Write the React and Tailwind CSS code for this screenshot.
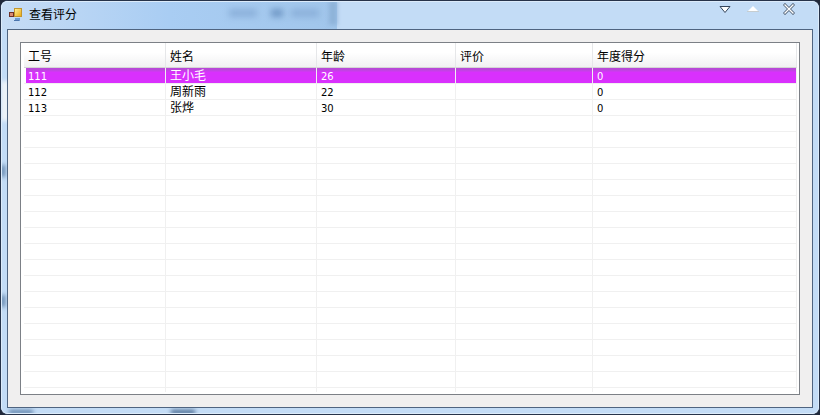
import { clsx } from 'clsx';

const employees = [
  { id: '111', name: '王小毛', age: '26', review: '', score: '0' },
  { id: '112', name: '周新雨', age: '22', review: '', score: '0' },
  { id: '113', name: '张烨', age: '30', review: '', score: '0' },
];

const columns = [
  { key: 'id', label: '工号', width: 'w-[142px]' },
  { key: 'name', label: '姓名', width: 'w-[151px]' },
  { key: 'age', label: '年龄', width: 'w-[139px]' },
  { key: 'review', label: '评价', width: 'w-[137px]' },
  { key: 'score', label: '年度得分', width: '' },
];

const ROW_COUNT = 20;

// Default WinForms application icon
const AppIcon = () => (
  <svg className="h-4 w-4" viewBox="0 0 16 16" aria-hidden="true">
    <defs>
      <linearGradient id="gold" x1="0" y1="0" x2="1" y2="1">
        <stop offset="0" stopColor="#fff3a0" />
        <stop offset="1" stopColor="#eaa60c" />
      </linearGradient>
    </defs>
    <rect x="7.5" y="1.5" width="7" height="8" fill="url(#gold)" stroke="#c2952c" />
    <rect x="2.5" y="5.5" width="4" height="4" fill="#d98a72" stroke="#6d3026" />
    <rect x="8" y="11" width="5" height="3" fill="#6f9bd0" />
    <rect x="7" y="13" width="5" height="1" fill="#4a74ad" />
  </svg>
);

const MinimizeIcon = () => (
  <svg className="h-3 w-3" viewBox="0 0 12 12" aria-hidden="true">
    <path d="M1 3.5h10L6 9.5z" fill="#fff" stroke="#35465c" />
  </svg>
);

const MaximizeIcon = () => (
  <svg className="h-3 w-3" viewBox="0 0 12 12" aria-hidden="true">
    <path d="M1 8h10L6 3z" fill="#fff" />
    <path d="M0 8.5h12" stroke="#c6cdd0" />
  </svg>
);

const CloseIcon = () => (
  <svg className="h-3 w-3" viewBox="0 0 12 12" fill="none" aria-hidden="true">
    <path d="M2 2l8 8M10 2l-8 8" stroke="#4c5c70" strokeWidth="3" strokeLinecap="square" />
    <path d="M2 2l8 8M10 2l-8 8" stroke="#fff" strokeWidth="1.4" strokeLinecap="square" />
  </svg>
);

// Soft shapes showing through the glass frame
const GlassBackdrop = () => (
  <div className="pointer-events-none absolute inset-0 overflow-hidden rounded-md" aria-hidden="true">
    <div className="absolute top-0 left-0 h-7 w-[336px] bg-linear-to-r from-[#c6dcf5] via-[#a9cdf3] to-[#a1c6eb]" />
    <div className="absolute top-0 left-[328px] h-6 w-2 bg-[#8eb2d8] blur-[2px]" />
    <div className="absolute top-2 left-[228px] h-2 w-7 bg-[#8bb0da] blur-[3px]" />
    <div className="absolute top-2 left-[270px] h-2 w-3 bg-[#6f97c5] blur-[3px]" />
    <div className="absolute top-2 left-[290px] h-2 w-7 bg-[#8bb0da] blur-[3px]" />
    <div className="absolute top-[80px] left-0 h-10 w-2 bg-[#eef3f8] blur-[2px]" />
    <div className="absolute top-[164px] left-0 h-3 w-1 bg-[#587ba3] blur-[2px]" />
    <div className="absolute top-[294px] left-0 h-3 w-1 bg-[#587ba3] blur-[2px]" />
    <div className="absolute bottom-0 left-2 h-1 w-6 bg-[#587ba3] blur-[2px]" />
    <div className="absolute bottom-0 left-[170px] h-1 w-6 bg-[#3f6088] blur-[2px]" />
    <div className="absolute inset-0 rounded-md border border-[#dcebfa]" />
  </div>
);

function TitleBar() {
  return (
    <header className="relative flex h-7 items-start justify-between pr-4">
      <div className="flex items-center gap-1 pt-[6px]">
        <AppIcon />
        <h1 className="pl-[2px] text-[12px] leading-4 text-black">查看评分</h1>
      </div>
      <div className="flex gap-4 pt-[2px] pr-[2px]">
        <button type="button" aria-label="最小化">
          <MinimizeIcon />
        </button>
        <button type="button" aria-label="最大化">
          <MaximizeIcon />
        </button>
        <button type="button" aria-label="关闭" className="pl-2">
          <CloseIcon />
        </button>
      </div>
    </header>
  );
}

function ScoreTable() {
  const rows = Array.from({ length: ROW_COUNT }, (_, index) => employees[index] ?? {});

  return (
    <table className="w-full table-fixed border-separate border-spacing-0 text-left">
      <thead>
        <tr className="h-[25px]">
          {columns.map((column) => (
            <th
              key={column.key}
              scope="col"
              className={clsx(
                'border-r border-b border-r-[#e6e7e9] border-b-[#d5d5d5] bg-linear-to-b from-white from-40% to-[#f1f1f2] p-0 pt-1 pl-1 text-[12px] leading-4 font-normal',
                column.width
              )}
            >
              {column.label}
            </th>
          ))}
        </tr>
      </thead>
      <tbody>
        {rows.map((row, index) => (
          <tr key={index} aria-selected={index === 0} className={clsx('h-4', index === 0 && 'text-white')}>
            {columns.map((column, columnIndex) => (
              <td
                key={column.key}
                className={clsx(
                  'h-4 border-r border-b border-[#f0f0f0] p-0',
                  index === 0 && columnIndex === 0 && 'pl-[2px]'
                )}
              >
                <div
                  className={clsx(
                    'h-[15px] text-[12px] leading-[17px]',
                    index === 0 && 'bg-linear-to-b from-[#b847d8] from-10% to-[#d930fd] to-30%',
                    index === 0 && columnIndex === 0 ? 'pl-[2px]' : 'pl-1'
                  )}
                >
                  {column.key === 'name' ? (
                    row.name
                  ) : (
                    <span className="block font-['DejaVu_Sans'] text-[10px] leading-[17px]">{row[column.key]}</span>
                  )}
                </div>
              </td>
            ))}
          </tr>
        ))}
      </tbody>
      <tfoot>
        <tr aria-hidden="true">
          {columns.map((column) => (
            <td key={column.key} className="h-1 border-r border-[#f0f0f0] p-0" />
          ))}
        </tr>
      </tfoot>
    </table>
  );
}

export default function App() {
  return (
    <div className="flex min-h-screen bg-[#20283a] font-['Liberation_Sans','Noto_Sans_CJK_SC',sans-serif]">
      <div className="relative flex flex-1 flex-col rounded-lg border border-[#26334a] bg-[#c3dcf6] px-[6px] pb-[6px]">
        <GlassBackdrop />
        <TitleBar />
        <main className="relative flex flex-1 flex-col border border-[#4f6480] bg-[#f0efef] p-3">
          <section className="flex-1 border border-[#7c8086] bg-white pr-[2px] pb-[2px] pl-[3px]">
            <ScoreTable />
          </section>
        </main>
      </div>
    </div>
  );
}
